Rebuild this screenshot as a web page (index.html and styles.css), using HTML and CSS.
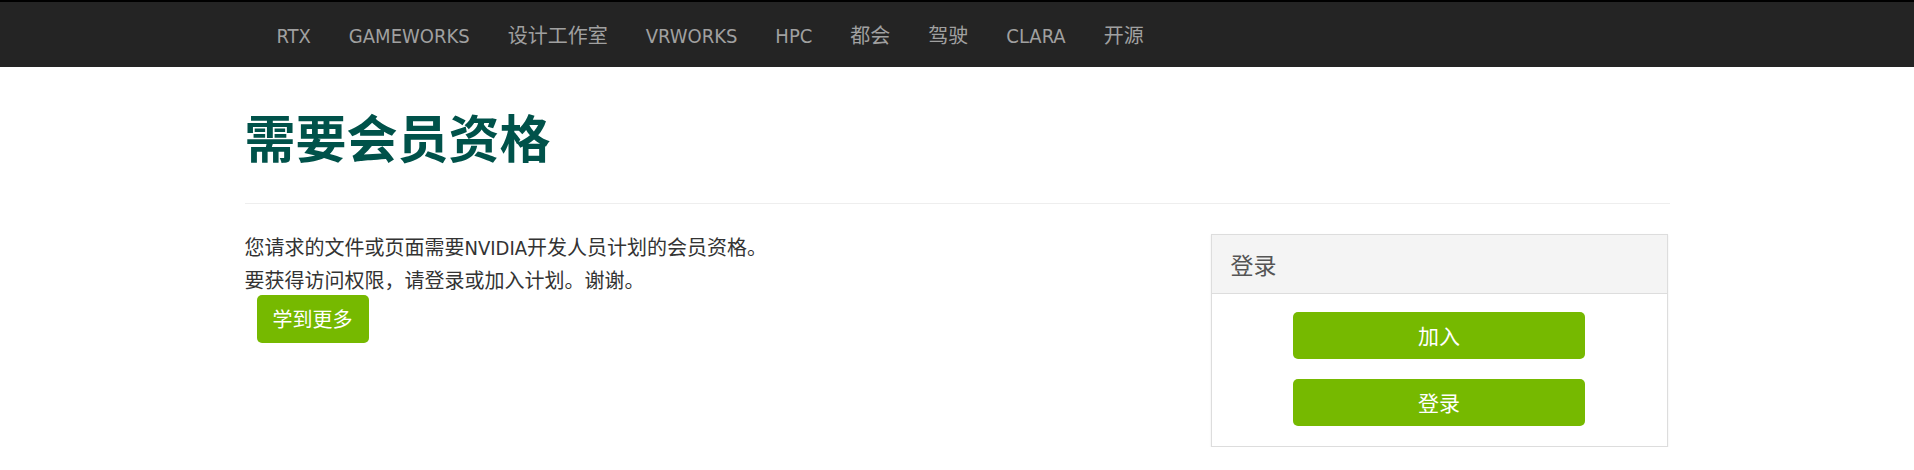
FILE: index.html
```html
<!DOCTYPE html>
<html lang="zh-CN">
<head>
    <meta charset="UTF-8">
    <title>需要会员资格</title>
    <meta name="viewport" content="width=device-width, initial-scale=1.0">
    <link rel="stylesheet" href="styles.css">
</head>
<body>
<header class="topbar">
    <nav class="topnav">
        <a href="#">RTX</a>
        <a href="#">GAMEWORKS</a>
        <a href="#">设计工作室</a>
        <a href="#">VRWORKS</a>
        <a href="#">HPC</a>
        <a href="#">都会</a>
        <a href="#">驾驶</a>
        <a href="#">CLARA</a>
        <a href="#">开源</a>
    </nav>
</header>
<div class="container">
    <h1 class="page-title">需要会员资格</h1>
    <div class="row">
        <div class="main-col">
            <p class="notice">您请求的文件或页面需要<span class="latin">NVIDIA</span>开发人员计划的会员资格。<br>要获得访问权限，请登录或加入计划。谢谢。</p>
            <a class="button" href="#">学到更多</a>
        </div>
        <div class="panel">
            <div class="panel-heading">登录</div>
            <div class="panel-body">
                <a class="button wide" href="#">加入</a>
                <a class="button wide" href="#">登录</a>
            </div>
        </div>
    </div>
</div>
</body>
</html>
```

FILE: styles.css
```css
body {
    margin: 0;
    padding: 0;
    background-color: #fff;
    color: #333;
    font-family: "Noto Sans CJK SC", "Noto Sans", sans-serif;
}
.topbar {
    background-color: #242424;
    border-top: 2px solid #000;
    height: 65px;
}
.topnav {
    width: 1425px;
    margin: 0 auto;
    padding-left: 13px;
    box-sizing: border-box;
    display: flex;
    align-items: center;
    height: 65px;
}
.topnav a {
    color: #a0a0a0;
    text-decoration: none;
    font-family: "DejaVu Sans Condensed", "Noto Sans CJK SC", sans-serif;
    font-size: 20px;
    line-height: 24px;
    padding: 2px 19px 0;
}
.topnav a:hover {
    color: #76b900;
}
.container {
    width: 1425px;
    margin: 0 auto;
}
.page-title {
    color: #00524a;
    font-size: 51px;
    font-weight: bold;
    line-height: 60px;
    margin: 39px 0 0;
    padding-bottom: 37px;
    border-bottom: 1px solid #eee;
}
.row {
    display: flex;
    justify-content: space-between;
    align-items: flex-start;
    margin-top: 27px;
}
.notice {
    font-size: 20px;
    line-height: 31px;
    margin: 0;
}
.latin {
    font-family: "DejaVu Sans Condensed", sans-serif;
}
.button {
    display: inline-block;
    background-color: #76b900;
    color: #fff;
    text-decoration: none;
    font-size: 20px;
    line-height: 30px;
    padding: 9px 16px;
    border-radius: 5px;
    margin: 0 0 0 12px;
}
.panel {
    width: 457px;
    box-sizing: border-box;
    border: 1px solid #ddd;
    margin: 3px 2px 0 0;
    box-shadow: 0 1px 2px rgba(0, 0, 0, 0.08);
}
.panel-heading {
    background-color: #f4f4f4;
    border-bottom: 1px solid #ddd;
    color: #555;
    font-size: 23px;
    line-height: 30px;
    padding: 14px 19px;
}
.panel-body {
    display: flex;
    flex-direction: column;
    align-items: center;
    gap: 20px;
    padding: 18px 0 20px;
}
.button.wide {
    width: 292px;
    box-sizing: border-box;
    text-align: center;
    font-size: 21px;
    padding: 8px 0 9px;
    margin: 0;
}
```
